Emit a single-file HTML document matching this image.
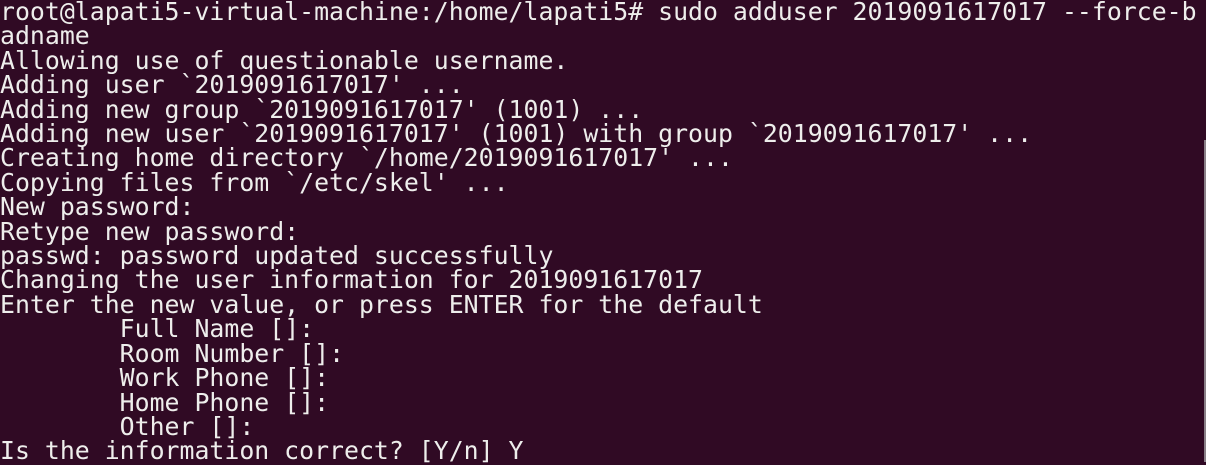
<!DOCTYPE html>
<html><head><meta charset="utf-8"><style>
html,body{margin:0;padding:0;background:#300a24;width:1206px;height:462px;overflow:hidden}
pre{margin:0;position:absolute;left:0;top:0px;font-family:"DejaVu Sans Mono","Liberation Mono",monospace;font-size:24.85px;line-height:24.4px;color:#eeeeec;white-space:pre}
.bar{position:absolute;left:1204px;top:140px;width:2px;height:322px;background:#8a8088}
</style></head><body>
<pre>root@lapati5-virtual-machine:/home/lapati5# sudo adduser 2019091617017 --force-b
adname
Allowing use of questionable username.
Adding user `2019091617017' ...
Adding new group `2019091617017' (1001) ...
Adding new user `2019091617017' (1001) with group `2019091617017' ...
Creating home directory `/home/2019091617017' ...
Copying files from `/etc/skel' ...
New password: 
Retype new password: 
passwd: password updated successfully
Changing the user information for 2019091617017
Enter the new value, or press ENTER for the default
	Full Name []: 
	Room Number []: 
	Work Phone []: 
	Home Phone []: 
	Other []: 
Is the information correct? [Y/n] Y</pre>
<div class="bar"></div>
</body></html>
